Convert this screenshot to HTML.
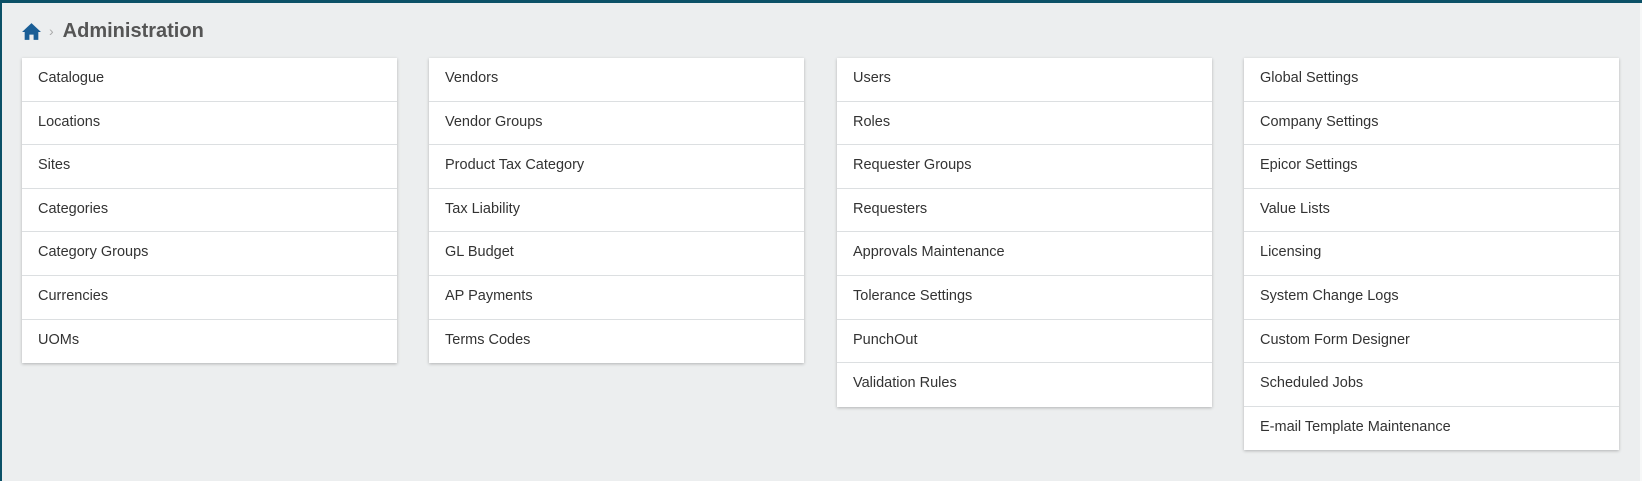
<!DOCTYPE html>
<html><head><style>
body{margin:0;width:1642px;height:481px;overflow:hidden;background:#eceeef;font-family:"Liberation Sans",sans-serif;position:relative}
.top{position:absolute;left:0;top:0;width:1642px;height:3px;background:#0b5167}
.left{position:absolute;left:0;top:0;width:2px;height:481px;background:#0b5167}
.right{position:absolute;right:0;top:3px;width:2px;height:478px;background:#f7f8f8}
.bc{position:absolute;left:21px;top:18px;height:26px;display:flex;align-items:center}
.bc .t{font-weight:bold;font-size:20px;color:#555;margin-left:9px}
.bc .s{color:#aaa;font-size:14px;margin-left:7px}
.card{position:absolute;top:58px;width:375px;background:#fff;box-shadow:0 1px 3px rgba(0,0,0,.25)}
.card div{height:43.6px;box-sizing:border-box;border-bottom:1px solid #dcdfe1;padding-left:16px;line-height:40px;font-size:14.5px;color:#333}
.card div:last-child{border-bottom:none}
</style></head><body>
<div class="top"></div><div class="left"></div><div class="right"></div>
<div class="bc"><svg width="21" height="19" viewBox="0 0 20 18"><path d="M10 1 L1 9.5 L3.5 9.5 L3.5 17 L8 17 L8 12 L12 12 L12 17 L16.5 17 L16.5 9.5 L19 9.5 Z" fill="#1a5e96"/></svg><span class="s">›</span><span class="t">Administration</span></div>
<div class="card" style="left:22px"><div>Catalogue</div><div>Locations</div><div>Sites</div><div>Categories</div><div>Category Groups</div><div>Currencies</div><div>UOMs</div></div>
<div class="card" style="left:429px"><div>Vendors</div><div>Vendor Groups</div><div>Product Tax Category</div><div>Tax Liability</div><div>GL Budget</div><div>AP Payments</div><div>Terms Codes</div></div>
<div class="card" style="left:837px"><div>Users</div><div>Roles</div><div>Requester Groups</div><div>Requesters</div><div>Approvals Maintenance</div><div>Tolerance Settings</div><div>PunchOut</div><div>Validation Rules</div></div>
<div class="card" style="left:1244px"><div>Global Settings</div><div>Company Settings</div><div>Epicor Settings</div><div>Value Lists</div><div>Licensing</div><div>System Change Logs</div><div>Custom Form Designer</div><div>Scheduled Jobs</div><div>E-mail Template Maintenance</div></div>
</body></html>
